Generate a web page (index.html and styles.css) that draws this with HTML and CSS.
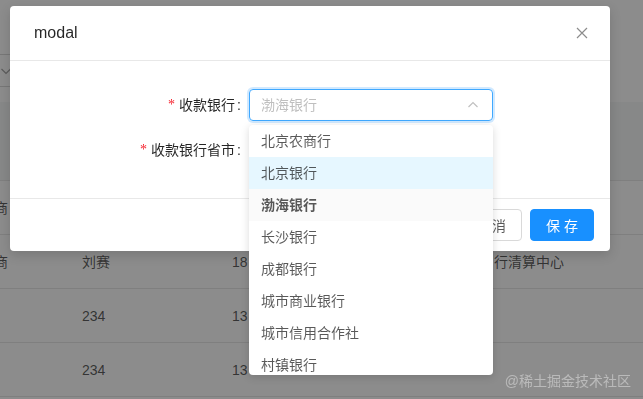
FILE: index.html
```html
<!DOCTYPE html>
<html lang="zh-CN">
<head>
<meta charset="utf-8">
<title>modal</title>
<link rel="stylesheet" href="styles.css">
</head>
<body>
<div class="page">
  <div class="filter">
    <div class="filter-input">
      <svg class="filter-arrow" viewBox="0 0 12 12" width="12" height="12"><polyline points="1.5,4 6,8.5 10.5,4" fill="none" stroke="rgba(0,0,0,0.35)" stroke-width="1.2"/></svg>
    </div>
  </div>
  <div class="table">
    <div class="thead"></div>
    <div class="row"><div class="c c1">商</div><div class="c c2"></div><div class="c c3"></div><div class="c c4"></div></div>
    <div class="row"><div class="c c1">商</div><div class="c c2">刘赛</div><div class="c c3">18</div><div class="c c4">行清算中心</div></div>
    <div class="row"><div class="c c1"></div><div class="c c2">234</div><div class="c c3">13</div><div class="c c4"></div></div>
    <div class="row"><div class="c c1"></div><div class="c c2">234</div><div class="c c3">13</div><div class="c c4"></div></div>
  </div>
</div>

<div class="mask"></div>

<div class="modal">
  <div class="modal-header">
    <div class="modal-title">modal</div>
    <svg class="modal-close" viewBox="0 0 12 12" width="12" height="12"><path d="M1 1 L11 11 M11 1 L1 11" fill="none" stroke="rgba(0,0,0,0.45)" stroke-width="1.2"/></svg>
  </div>
  <div class="modal-body">
    <div class="form-item">
      <label class="form-label"><span class="req">*</span>收款银行</label>
      <div class="form-control">
        <div class="select focused">
          <span class="placeholder">渤海银行</span>
          <svg class="select-arrow" viewBox="0 0 12 12" width="12" height="12"><polyline points="1.5,8 6,3.5 10.5,8" fill="none" stroke="rgba(0,0,0,0.25)" stroke-width="1.2"/></svg>
        </div>
      </div>
    </div>
    <div class="form-item second">
      <label class="form-label"><span class="req">*</span>收款银行省市</label>
      <div class="form-control">
        <div class="select"></div>
      </div>
    </div>
  </div>
  <div class="modal-footer">
    <button class="btn">取 消</button>
    <button class="btn btn-primary">保 存</button>
  </div>
</div>

<div class="dropdown">
  <div class="opt">北京农商行</div>
  <div class="opt active">北京银行</div>
  <div class="opt selected">渤海银行</div>
  <div class="opt">长沙银行</div>
  <div class="opt">成都银行</div>
  <div class="opt">城市商业银行</div>
  <div class="opt">城市信用合作社</div>
  <div class="opt">村镇银行</div>
</div>

<div class="watermark">@稀土掘金技术社区</div>
</body>
</html>
```

FILE: styles.css
```css
html, body {
  margin: 0;
  padding: 0;
}
body {
  width: 643px;
  height: 399px;
  overflow: hidden;
  background: #fff;
  font-family: "Liberation Sans", "Noto Sans CJK SC", sans-serif;
  font-size: 14px;
  color: rgba(0, 0, 0, 0.65);
}

/* background page */
.page {
  padding-top: 54px;
}
.filter {
  height: 33px;
}
.filter-input {
  box-sizing: border-box;
  height: 33px;
  width: 200px;
  margin-left: -1px;
  border: 1px solid #d9d9d9;
  display: flex;
  align-items: center;
}
.filter-arrow {
  display: block;
}
.table {
  margin-top: 15px;
}
.thead {
  height: 78px;
  background: #f6f7f8;
  border-bottom: 1px solid #e8e8e8;
}
.row {
  display: grid;
  grid-template-columns: 66px 150px 262px 165px;
  height: 53px;
  border-bottom: 1px solid #e8e8e8;
  align-items: center;
}
.c {
  white-space: nowrap;
  overflow: hidden;
  line-height: 22px;
  padding-left: 16px;
}
.c1 {
  padding-left: 0;
  text-indent: -6px;
}

.mask {
  position: fixed;
  inset: 0;
  background: rgba(0, 0, 0, 0.45);
}

/* modal */
.modal {
  position: absolute;
  left: 10px;
  top: 6px;
  width: 600px;
  background: #fff;
  border-radius: 4px;
  box-shadow: 0 4px 12px rgba(0, 0, 0, 0.15);
}
.modal-header {
  display: flex;
  align-items: center;
  justify-content: space-between;
  padding: 16px 22px 16px 24px;
  border-bottom: 1px solid #e8e8e8;
}
.modal-title {
  font-size: 16px;
  line-height: 22px;
  font-weight: 500;
  color: rgba(0, 0, 0, 0.85);
}
.modal-close {
  display: block;
}
.modal-body {
  padding: 24px 24px 28px;
}
.form-item {
  display: grid;
  grid-template-columns: 215px 244px;
  height: 40px;
  align-items: center;
}
.form-item.second {
  margin-top: 5px;
}
.form-label {
  display: flex;
  justify-content: flex-end;
  align-items: center;
  line-height: 22px;
  color: rgba(0, 0, 0, 0.85);
  white-space: nowrap;
}
.form-label::after {
  content: ":";
  margin: 0 8px 0 2px;
}
.req {
  color: #f5222d;
  margin-right: 4px;
  font-family: "Liberation Serif", serif;
  font-size: 14px;
}
.select {
  box-sizing: border-box;
  height: 32px;
  border: 1px solid #d9d9d9;
  border-radius: 4px;
  display: flex;
  align-items: center;
  justify-content: space-between;
  padding: 0 13px 0 11px;
}
.select.focused {
  border-color: #40a9ff;
  box-shadow: 0 0 0 2px rgba(24, 144, 255, 0.2);
}
.placeholder {
  color: #bfbfbf;
  line-height: 22px;
}
.select-arrow {
  display: block;
}
.modal-footer {
  display: flex;
  justify-content: flex-end;
  gap: 8px;
  padding: 10px 16px;
  border-top: 1px solid #e8e8e8;
}
.btn {
  box-sizing: border-box;
  width: 64px;
  height: 32px;
  border: 1px solid #d9d9d9;
  border-radius: 4px;
  background: #fff;
  color: rgba(0, 0, 0, 0.65);
  font-family: inherit;
  font-size: 14px;
  padding: 0;
}
.btn-primary {
  background: #1890ff;
  border-color: #1890ff;
  color: #fff;
}

/* dropdown */
.dropdown {
  position: absolute;
  left: 249px;
  top: 125px;
  width: 244px;
  height: 250px;
  overflow: hidden;
  background: #fff;
  border-radius: 4px;
  box-shadow: 0 2px 8px rgba(0, 0, 0, 0.15);
}
.opt {
  height: 32px;
  box-sizing: border-box;
  padding: 5px 12px;
  line-height: 22px;
  color: rgba(0, 0, 0, 0.65);
  white-space: nowrap;
}
.opt.active {
  background: #e6f7ff;
}
.opt.selected {
  background: #fafafa;
  font-weight: 600;
}

.watermark {
  position: absolute;
  right: 12px;
  bottom: 8px;
  line-height: 20px;
  font-size: 14px;
  color: rgba(255, 255, 255, 0.4);
  white-space: nowrap;
}
```
